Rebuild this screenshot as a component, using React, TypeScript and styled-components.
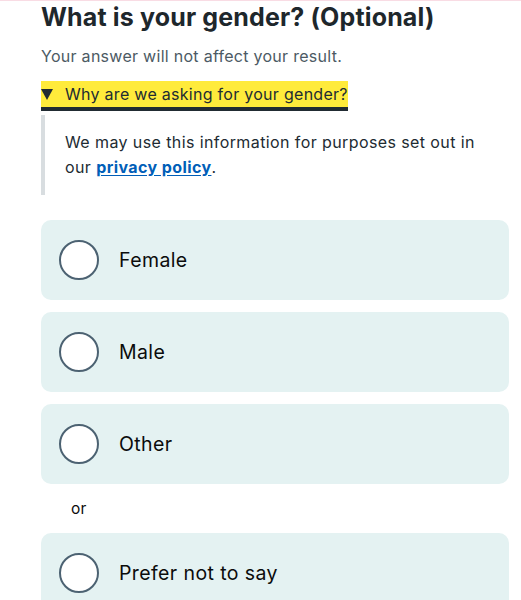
import React from "react";
import styled, { createGlobalStyle } from "styled-components";

const GlobalStyle = createGlobalStyle`
  html, body { margin: 0; padding: 0; background: #ffffff; }
  body { font-family: Inter, "Noto Sans", "DejaVu Sans", sans-serif; color: #212b32; }
`;

const Page = styled.main`
  border-top: 1px solid #f9dce4;
  padding: 0 12px 0 41px;
  box-sizing: border-box;
  width: 521px;
`;

const Title = styled.h1`
  margin: 0;
  font-size: 25px;
  line-height: 32px;
  font-weight: 700;
  color: #1e272c;
  letter-spacing: 0.15px;
`;

const Hint = styled.p`
  margin: 11px 0 0;
  font-size: 16px;
  line-height: 24px;
  letter-spacing: 0.28px;
  color: #4c5a64;
`;

const Details = styled.details`
  margin-top: 13px;
`;

const Summary = styled.summary`
  display: inline-flex;
  align-items: center;
  gap: 12px;
  list-style: none;
  background: #ffeb3b;
  border-bottom: 4px solid #212b32;
  height: 26px;
  font-size: 16px;
  letter-spacing: 0.28px;
  color: #212b32;
  cursor: pointer;
  &::-webkit-details-marker { display: none; }
`;

const Triangle = styled.span`
  width: 0;
  height: 0;
  border-left: 6px solid transparent;
  border-right: 6px solid transparent;
  border-top: 11px solid #212b32;
`;

const Panel = styled.div`
  margin-top: 4px;
  border-left: 4px solid #d8dde0;
  padding: 15px 24px 15px 20px;
  font-size: 16px;
  line-height: 25px;
  letter-spacing: 0.4px;
  color: #212b32;
`;

const Link = styled.a`
  color: #005eb8;
  font-weight: 700;
  text-decoration: underline;
  text-underline-offset: 2px;
`;

const Options = styled.div`
  margin-top: 25px;
  display: flex;
  flex-direction: column;
  gap: 12px;
`;

const Card = styled.label`
  display: flex;
  align-items: center;
  gap: 20px;
  height: 80px;
  padding: 0 18px;
  box-sizing: border-box;
  background: #e4f2f2;
  border-radius: 10px;
  cursor: pointer;
`;

const Radio = styled.span`
  width: 40px;
  height: 40px;
  box-sizing: border-box;
  border: 2px solid #4c6272;
  border-radius: 50%;
  background: #ffffff;
  flex: none;
`;

const Label = styled.span`
  font-size: 19.5px;
  letter-spacing: 0.4px;
  color: #0b0c0c;
`;

const Or = styled.div`
  padding-left: 30px;
  height: 25px;
  display: flex;
  align-items: center;
  font-size: 15.5px;
  letter-spacing: 0.3px;
  color: #0b0c0c;
`;

export default function App() {
  const options = ["Female", "Male", "Other"];
  return (
    <>
      <GlobalStyle />
      <Page>
        <Title>What is your gender? (Optional)</Title>
        <Hint>Your answer will not affect your result.</Hint>
        <Details open>
          <Summary>
            <Triangle />
            Why are we asking for your gender?
          </Summary>
          <Panel>
            We may use this information for purposes set out in our{" "}
            <Link href="#">privacy policy</Link>.
          </Panel>
        </Details>
        <Options>
          {options.map((o) => (
            <Card key={o}>
              <Radio />
              <Label>{o}</Label>
            </Card>
          ))}
          <Or>or</Or>
          <Card>
            <Radio />
            <Label>Prefer not to say</Label>
          </Card>
        </Options>
      </Page>
    </>
  );
}
